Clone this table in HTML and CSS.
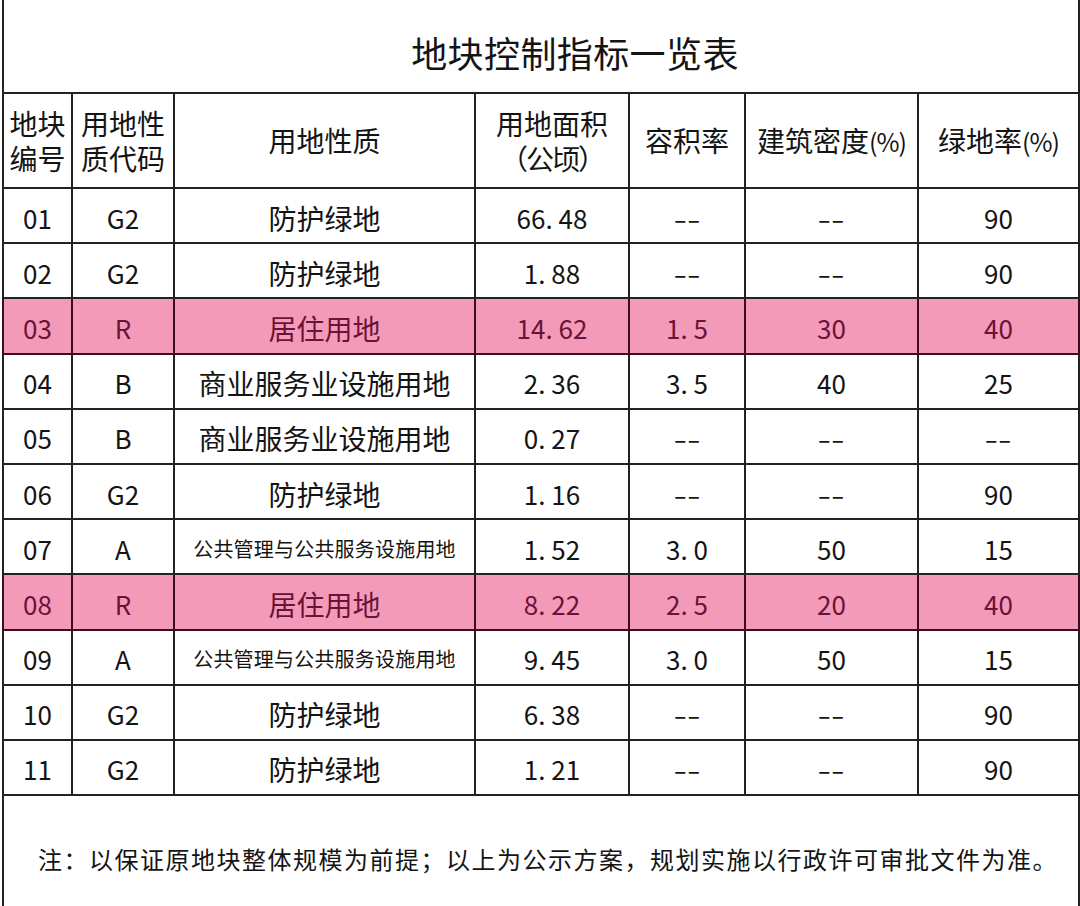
FILE: index.html
```html
<!DOCTYPE html>
<html lang="zh-CN">
<head>
<meta charset="utf-8">
<title>地块控制指标一览表</title>
<link rel="stylesheet" href="styles.css">
</head>
<body>
<div class="page">
<table class="plan">
  <colgroup>
    <col class="c1"><col class="c2"><col class="c3"><col class="c4"><col class="c5"><col class="c6"><col class="c7">
  </colgroup>
  <tr class="title-row"><td colspan="7" class="title">地块控制指标一览表</td></tr>
  <tr class="head">
    <th><span class="ln">地块</span><span class="ln">编号</span></th>
    <th><span class="ln">用地性</span><span class="ln">质代码</span></th>
    <th>用地性质</th>
    <th><span class="ln">用地面积</span><span class="ln paren">（公顷）</span></th>
    <th>容积率</th>
    <th>建筑密度<span class="pct">(%)</span></th>
    <th>绿地率<span class="pct">(%)</span></th>
  </tr>
  <tr><td>01</td><td>G2</td><td class="cn">防护绿地</td><td>66. 48</td><td><span class="dash">--</span></td><td><span class="dash">--</span></td><td>90</td></tr>
  <tr><td>02</td><td>G2</td><td class="cn">防护绿地</td><td>1. 88</td><td><span class="dash">--</span></td><td><span class="dash">--</span></td><td>90</td></tr>
  <tr class="hl"><td>03</td><td>R</td><td class="cn">居住用地</td><td>14. 62</td><td>1. 5</td><td>30</td><td>40</td></tr>
  <tr><td>04</td><td>B</td><td class="cn">商业服务业设施用地</td><td>2. 36</td><td>3. 5</td><td>40</td><td>25</td></tr>
  <tr><td>05</td><td>B</td><td class="cn">商业服务业设施用地</td><td>0. 27</td><td><span class="dash">--</span></td><td><span class="dash">--</span></td><td><span class="dash">--</span></td></tr>
  <tr><td>06</td><td>G2</td><td class="cn">防护绿地</td><td>1. 16</td><td><span class="dash">--</span></td><td><span class="dash">--</span></td><td>90</td></tr>
  <tr><td>07</td><td>A</td><td class="cn small">公共管理与公共服务设施用地</td><td>1. 52</td><td>3. 0</td><td>50</td><td>15</td></tr>
  <tr class="hl"><td>08</td><td>R</td><td class="cn">居住用地</td><td>8. 22</td><td>2. 5</td><td>20</td><td>40</td></tr>
  <tr><td>09</td><td>A</td><td class="cn small">公共管理与公共服务设施用地</td><td>9. 45</td><td>3. 0</td><td>50</td><td>15</td></tr>
  <tr><td>10</td><td>G2</td><td class="cn">防护绿地</td><td>6. 38</td><td><span class="dash">--</span></td><td><span class="dash">--</span></td><td>90</td></tr>
  <tr><td>11</td><td>G2</td><td class="cn">防护绿地</td><td>1. 21</td><td><span class="dash">--</span></td><td><span class="dash">--</span></td><td>90</td></tr>
  <tr class="note-row"><td colspan="7" class="note">注：以保证原地块整体规模为前提；以上为公示方案，规划实施以行政许可审批文件为准。</td></tr>
</table>
</div>
</body>
</html>
```

FILE: styles.css
```css
html, body {
  margin: 0;
  padding: 0;
  background: #ffffff;
}

body {
  font-family: "Noto Sans CJK SC", "Noto Sans", sans-serif;
  color: #141414;
  overflow: hidden;
  height: 906px;
}

.page {
  padding-left: 2px;
}

.plan {
  border-collapse: collapse;
  table-layout: fixed;
  width: 1076px;
}

.c1 { width: 69px; }
.c2 { width: 102px; }
.c3 { width: 301px; }
.c4 { width: 154px; }
.c5 { width: 116px; }
.c6 { width: 173px; }
.c7 { width: 161px; }

.plan td,
.plan th {
  border: 2px solid #222222;
  text-align: center;
  vertical-align: middle;
  padding: 4px 0 0;
  font-weight: 400;
  font-size: 26px;
  line-height: 30px;
  white-space: nowrap;
  overflow: hidden;
}

.plan tr {
  height: 55.2px;
}

.plan .title-row {
  height: 93px;
}

.plan .title {
  border-top: none;
  font-size: 36px;
  line-height: 40px;
  padding: 12px 0 0 68px;
  letter-spacing: 0.4px;
}

.plan .head {
  height: 95px;
}

.plan .head th {
  font-size: 28px;
  line-height: 35px;
  padding: 0;
}

.plan .head th .ln {
  display: block;
  height: 35px;
}

.plan .head th .pct {
  font-size: 25px;
  letter-spacing: -1px;
}

.plan .head th .paren {
  letter-spacing: -2px;
}

.plan td.cn {
  font-size: 28px;
}

.plan td.small {
  font-size: 20px;
  letter-spacing: 0.2px;
}

.dash {
  display: inline-block;
  transform: scaleX(1.5);
  letter-spacing: 0;
}

.hl td {
  background: #f49ab9;
  color: #6a1338;
  border-color: #3c0c22;
}

.plan .note-row {
  height: 126px;
}

.plan .note {
  font-size: 24px;
  letter-spacing: 1.5px;
  padding: 0 0 0 14px;
  border-bottom: none;
}
```
